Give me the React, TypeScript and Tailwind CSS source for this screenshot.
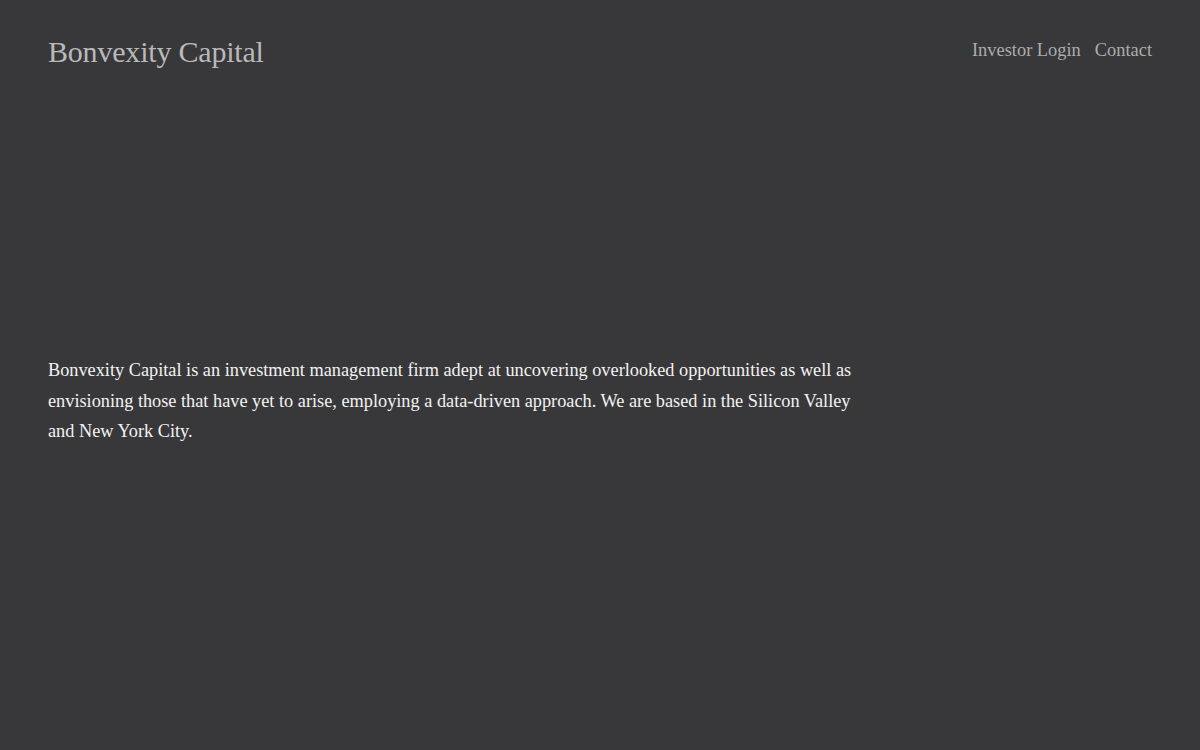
export default function App() {
  return (
    <div className="min-h-screen w-full bg-[#38383a] font-['Liberation_Serif',serif]">
      <header className="flex items-start justify-between px-12 pt-[33px]">
        <h1 className="text-[30px] leading-[38px] tracking-[-0.2px] text-[#b9b9b9] font-normal">
          Bonvexity Capital
        </h1>
        <nav className="flex gap-[14px] pt-[3px] text-[18.4px] leading-[28px] text-[#acacac]">
          <a href="#">Investor Login</a>
          <a href="#">Contact</a>
        </nav>
      </header>
      <main className="px-12 pt-[284px]">
        <p className="max-w-[815px] text-[18.3px] leading-[30.5px] text-[#f2f2f2]">
          Bonvexity Capital is an investment management firm adept at uncovering overlooked
          opportunities as well as envisioning those that have yet to arise, employing a
          data-driven approach. We are based in the Silicon Valley and New York City.
        </p>
      </main>
    </div>
  );
}
